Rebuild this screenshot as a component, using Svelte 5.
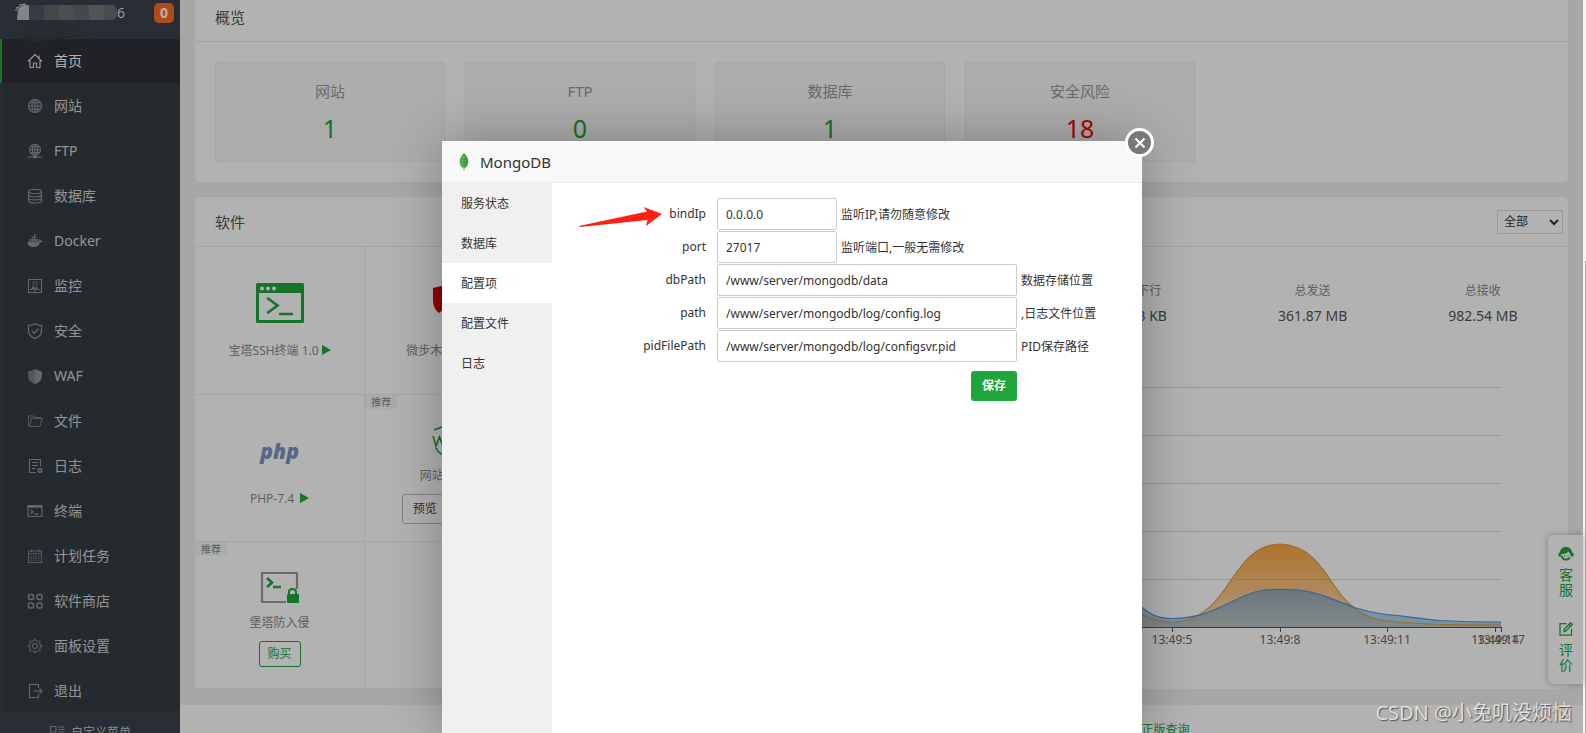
<script>
  const menu = [
    { name: '首页', icon: 'home', active: true },
    { name: '网站', icon: 'globe' },
    { name: 'FTP', icon: 'ftp' },
    { name: '数据库', icon: 'database' },
    { name: 'Docker', icon: 'docker' },
    { name: '监控', icon: 'monitor' },
    { name: '安全', icon: 'safe' },
    { name: 'WAF', icon: 'waf' },
    { name: '文件', icon: 'folder' },
    { name: '日志', icon: 'log' },
    { name: '终端', icon: 'terminal' },
    { name: '计划任务', icon: 'calendar' },
    { name: '软件商店', icon: 'store' },
    { name: '面板设置', icon: 'gear' },
    { name: '退出', icon: 'exit' }
  ];

  const overview = [
    { name: '网站', value: 1 },
    { name: 'FTP', value: 0 },
    { name: '数据库', value: 1 },
    { name: '安全风险', value: 18, risk: true }
  ];

  const traffic = [
    { name: '上行', value: '0.72 KB', dot: '#f7b851' },
    { name: '下行', value: '0.93 KB', dot: '#52a9ff' },
    { name: '总发送', value: '361.87 MB' },
    { name: '总接收', value: '982.54 MB' }
  ];

  const gridLines = [387, 435, 483, 531, 579];
  const ticks = [
    { x: 956, label: '13:48:59' },
    { x: 1064, label: '13:49:2' },
    { x: 1172, label: '13:49:5' },
    { x: 1280, label: '13:49:8' },
    { x: 1387, label: '13:49:11' },
    { x: 1495, label: '13:49:14' },
    { x: 1501, label: '13:49:17' }
  ];
  const downLine = 'M956 600C1000 590 1060 560 1100 575C1125 590 1135 604 1142 607.500C1152 616 1160 618.500 1172 618.500C1184 618.500 1190 617 1200 615C1222 609 1245 592 1264 590C1274 589.300 1290 589.300 1299 590C1318 592 1334 600 1354 607.500C1366 611 1377 613.500 1387 614.500C1404 616 1422 619 1440 620.500C1460 621.500 1480 622 1501 622';
  const upLine = 'M956 610C1000 600 1060 580 1100 590C1125 602 1135 610 1142 614C1152 620 1160 622 1172 622C1184 622 1190 620 1200 614C1232 596 1238 545 1280 544C1322 545 1330 592 1354 607.500C1364 617 1376 620 1387 621C1404 622.500 1422 624 1440 624.500L1501 625';

  const tabs = ['服务状态', '数据库', '配置项', '配置文件', '日志'];
  let activeTab = $state('配置项');

  let fields = $state([
    { key: 'bindIp', value: '0.0.0.0', hint: '监听IP,请勿随意修改', wide: false },
    { key: 'port', value: '27017', hint: '监听端口,一般无需修改', wide: false },
    { key: 'dbPath', value: '/www/server/mongodb/data', hint: '数据存储位置', wide: true },
    { key: 'path', value: '/www/server/mongodb/log/config.log', hint: ',日志文件位置', wide: true },
    { key: 'pidFilePath', value: '/www/server/mongodb/log/configsvr.pid', hint: 'PID保存路径', wide: true }
  ]);
</script>

{#snippet menuIcon(name)}
  <svg class="menu-icon" viewBox="0 0 16 16" fill="none" stroke="currentColor" stroke-width="1.100" aria-hidden="true">
    {#if name === 'home'}
      <path d="M1 8.500 8 1.500l7 7M3 7v7.500h3.500V10h3v4.500H13V7M12 5V2.500" />
    {:else if name === 'globe'}
      <circle cx="8" cy="8" r="6.500" /><ellipse cx="8" cy="8" rx="3" ry="6.500" />
      <path d="M8 1.500v13M1.500 8h13M2.700 4.700h10.600M2.700 11.300h10.600" />
    {:else if name === 'ftp'}
      <circle cx="8" cy="6.800" r="5.500" /><ellipse cx="8" cy="6.800" rx="2.600" ry="5.500" />
      <path d="M8 1.300v12M2.500 6.800h11M3.400 4h9.200M3.400 9.600h9.200M.500 14h15M6 14h4" />
      <path d="M6 14h4" stroke-width="2.500" />
    {:else if name === 'database'}
      <ellipse cx="8" cy="3.500" rx="6.500" ry="2.200" />
      <path d="M1.500 3.500v9.300c0 3 13 3 13 0V3.500M1.500 6.700c0 2.800 13 2.800 13 0M1.500 9.800c0 2.800 13 2.800 13 0" />
    {:else if name === 'docker'}
      <path fill="currentColor" stroke="none" d="M1 8.500h10.800c.600-1 .500-2 .1-3 1 .4 1.600 1.100 1.800 2 .8-.2 1.600 0 2.100.400-.500 1-1.500 1.500-2.700 1.500C12 12.500 9.600 14 6.500 14 3 14 .700 12.500.700 9.500zM2.500 6h1.800v1.900H2.500zM4.700 6h1.800v1.900H4.700zM6.900 6h1.800v1.900H6.900zM9.100 6h1.800v1.900H9.100zM4.700 3.800h1.800v1.800H4.700zM6.900 3.800h1.800v1.800H6.900zM6.900 1.600h1.800v1.800H6.900z" />
    {:else if name === 'monitor'}
      <path d="M1.500 1.500h13v13h-13zM3 11.500h2l1.200-3 1.600 4 1.500-3.500 1 2.500h2.500" />
      <path d="M5 4h6M5 6h6" stroke-width="1" opacity=".6" />
    {:else if name === 'safe'}
      <path d="M8 .8c2 1.300 4 1.700 6.500 1.700v5.200c0 3.800-2.500 6.300-6.500 7.700-4-1.400-6.500-3.900-6.500-7.700V2.500C4 2.500 6 2.100 8 .8zM4.700 7.800l2.600 2.500 4.200-4.500" stroke-width="1.300" />
    {:else if name === 'waf'}
      <path fill="currentColor" stroke="none" d="M8 .5 7 2 5.500 1.500 4.500 3 3 2.500 1 4v4c0 4 3 6.500 7 8z" opacity=".75" />
      <path fill="currentColor" stroke="none" d="m8 .5 1 1.500 1.500-.5 1 1.500 1.500-.5L15 4v4c0 4-3 6.500-7 8z" />
    {:else if name === 'folder'}
      <path d="M2.500 13.500h10.300l2.500-8H4.500zM1.500 12.500V3h5l1.500 1.500h5.500v1" opacity=".75" />
    {:else if name === 'log'}
      <path d="M13.500 8.500v-7h-11v13H9M5 4.500h6M5 7.500h6M5 10.500h4" />
      <circle cx="13" cy="12.500" r="1.800" stroke-width="1.500" />
    {:else if name === 'terminal'}
      <path d="M1 2.500h14v11H1z" /><path d="M1 3.500h14" stroke-width="2.500" />
      <path d="m3.500 6.800 2.500 2-2.500 2M7.500 11h3.500" stroke-width="1.300" />
    {:else if name === 'calendar'}
      <path d="M1.500 3h13v11.500h-13zM1.500 5.800h13M4.500 1v3M11.500 1v3" opacity=".8" />
      <path d="M3.500 8.200h9M3.500 10.200h9M3.500 12.200h9" stroke-dasharray="1.500 1" opacity=".8" />
    {:else if name === 'store'}
      <g stroke-width="1.500"><rect x="1.500" y="1.500" width="5" height="5" rx="1.500" /><rect x="10" y="1.500" width="5" height="5" rx="1.500" /><rect x="1.500" y="10" width="5" height="5" rx="1.500" /><rect x="10" y="10" width="5" height="5" rx="1.500" /></g>
    {:else if name === 'gear'}
      <path d="M8 1.200 9.600 3 12.800 3.200 13 6.400 14.800 8 13 9.600 12.800 12.800 9.600 13 8 14.800 6.400 13 3.200 12.800 3 9.600 1.200 8 3 6.400 3.200 3.200 6.400 3z" opacity=".85" />
      <circle cx="8" cy="8" r="2.500" opacity=".85" />
    {:else if name === 'exit'}
      <path d="M11.500 5V1.500h-9v13h9V11M7 8h8M12.500 5.500 15 8l-2.500 2.500" />
    {:else if name === 'custom'}
      <path d="M1.500 1.500h5.500v5.500H1.500zM9.500 2h6M9.500 4.500h6M9.500 7h6M1.500 10h5.500v5H1.500zM9.500 10.500h6M9.500 13.500h6" />
    {/if}
  </svg>
{/snippet}

<div class="screen">
  <div class="app">
    <aside class="sidebar">
      <header class="host">
        <svg class="mask" viewBox="0 0 104 42" aria-hidden="true">
          <path d="M2 20h40l44 15H30C12 38 4 32 2 20z" fill="#393f4a" />
          <path d="M6 33c10 5 30 3 82 2-32 2-58 6-72 7-5-2-8-5-10-9z" fill="#353a44" />
          <path d="M2 20C2 10 7 5 14 5v15z" fill="#bdbdbd" />
          <path d="M14 5h15v15H14z" fill="#4b5763" /><path d="M29 5h15v15H29z" fill="#626568" />
          <path d="M44 5h15v15H44z" fill="#706f71" /><path d="M59 5h15v15H59z" fill="#64686d" />
          <path d="M74 5h15v15H74z" fill="#7a7777" /><path d="M89 5h10l3 5v6l-3 4H89z" fill="#676d70" />
          <path d="M1 8l10-3M0 10l10-3M4 5l7-1M2 12l4-3" stroke="#d8d8d8" fill="none" />
        </svg>
        <span class="host-end">6</span>
        <span class="badge">0</span>
      </header>
      <nav>
        {#each menu as item}
          <a href="#{item.icon}" class:active={item.active}>
            {@render menuIcon(item.icon)}
            <span>{item.name}</span>
          </a>
        {/each}
      </nav>
      <button class="custom">{@render menuIcon('custom')}<span>自定义菜单</span></button>
    </aside>

    <main>
      <div class="content">
        <section class="panel overview">
          <h2>概览</h2>
          <ul>
            {#each overview as card}
              <li>
                <span>{card.name}</span>
                <a href="#{card.name}" class:risk={card.risk}>{card.value}</a>
              </li>
            {/each}
          </ul>
        </section>

        <div class="columns">
          <section class="panel software">
            <h2>软件</h2>
            <div class="cells">
              <div class="cell">
                <svg class="soft-icon" width="48" height="40" viewBox="0 0 48 40" aria-hidden="true">
                  <path d="M1.500 1.500h45v37h-45z" fill="none" stroke="#20a53a" stroke-width="3" stroke-linejoin="round" />
                  <path d="M1 1h46v9H1z" fill="#20a53a" />
                  <g fill="#fff"><circle cx="6" cy="5.500" r="2" /><circle cx="12" cy="5.500" r="2" /><circle cx="18" cy="5.500" r="2" /></g>
                  <path d="m12 15.500 9.500 7-9.500 7M24 31h12" fill="none" stroke="#20a53a" stroke-width="2.600" stroke-linecap="round" />
                </svg>
                <p>宝塔SSH终端 1.0<i class="play"></i></p>
              </div>
              <div class="cell">
                <svg class="soft-icon" width="34" height="40" viewBox="0 0 34 40" aria-hidden="true">
                  <path d="M0 5 17 1l17 4v13c0 5-2 9-5 12-3-1-4-3-5-5-1 6-4 11-7 14-3-3-6-8-7-14-1 2-2 4-4 5C2 27 0 22 0 17z" fill="#c00" />
                </svg>
                <p>微步木马检测 <i class="play"></i></p>
              </div>
              <div class="cell"></div><div class="cell"></div>

              <div class="cell">
                <span class="soft-icon php">php</span>
                <p>PHP-7.4 <i class="play"></i></p>
              </div>
              <div class="cell tight">
                <span class="tag">推荐</span>
                <svg class="soft-icon small" width="36" height="34" viewBox="0 0 36 34" fill="none" stroke="#20a53a" stroke-width="1.600" aria-hidden="true">
                  <path d="m2 6 16-6 16 6M4 24c2 5 8 8 14 10 6-2 12-5 14-10" /><path d="m1 12 3 10 3.500-9L11 22l3-10M18 22l4-10 4 10M29 22V12h6" />
                </svg>
                <p>网站防火墙</p>
                <div class="actions"><button class="plain">预览</button><button class="plain">购买</button></div>
              </div>
              <div class="cell"></div><div class="cell"></div>

              <div class="cell tight">
                <span class="tag">推荐</span>
                <svg class="soft-icon small" width="40" height="34" viewBox="0 0 40 34" fill="none" aria-hidden="true">
                  <path d="M37 18V2H2v29h24" stroke="#999" stroke-width="2.200" stroke-linejoin="round" />
                  <path d="m7 7 5 4.500L7 16M13 16h8" stroke="#20a53a" stroke-width="2.600" />
                  <path d="M29 24v-3c0-4 7-4 7 0v3" stroke="#20a53a" stroke-width="2" />
                  <rect x="27" y="23" width="12" height="9" rx="1" fill="#20a53a" />
                </svg>
                <p>堡塔防入侵</p>
                <div class="actions"><button class="buy">购买</button></div>
              </div>
              <div class="cell"></div><div class="cell"></div><div class="cell"></div>
            </div>
          </section>

          <section class="panel flow">
            <div class="flow-head">
              <h2>流量</h2>
              <select aria-label="网卡"><option>全部</option></select>
            </div>
            <div class="stats">
              {#each traffic as stat}
                <div>
                  <span>{#if stat.dot}<i class="dot" style="background: {stat.dot}"></i>{/if}{stat.name}</span>
                  <strong>{stat.value}</strong>
                </div>
              {/each}
            </div>
            <svg class="chart" viewBox="887 375 681 310" role="img" aria-label="流量">
              <defs>
                <linearGradient id="up" x1="0" y1="544" x2="0" y2="627" gradientUnits="userSpaceOnUse">
                  <stop offset="0" stop-color="#fca440" /><stop offset="1" stop-color="#f7dcbc" />
                </linearGradient>
                <linearGradient id="down" x1="0" y1="589" x2="0" y2="627" gradientUnits="userSpaceOnUse">
                  <stop offset="0" stop-color="#9aaab2" /><stop offset="1" stop-color="#b9c3c4" />
                </linearGradient>
                <clipPath id="under"><path d="{upLine}V627H956z" /></clipPath>
              </defs>
              {#each gridLines as y}
                <path d="M940 {y}.5H1501" stroke="#d6d6d6" />
              {/each}
              <path d="{upLine}V627H956z" fill="url(#up)" />
              <path d="M1235 579.500H1330" stroke="#a98458" opacity=".35" />
              <path d="{downLine}V627H956z" fill="#b3cee9" />
              <path d="{downLine}V627H956z" fill="url(#down)" clip-path="url(#under)" />
              <path d={upLine} fill="none" stroke="#d7a148" stroke-width="1.200" />
              <path d={downLine} fill="none" stroke="#4c93dc" stroke-width="1.200" />
              <path d="M940 627.500H1501" stroke="#555" />
              {#each ticks as tick}
                <path d="M{tick.x}.5 627v5" stroke="#555" />
                <text x={tick.x} y="644" text-anchor="middle">{tick.label}</text>
              {/each}
            </svg>
          </section>
        </div>
      </div>
      <footer>
        <span>宝塔Linux面板 ©2014-2023 广东堡塔安全技术有限公司 (bt.cn)</span>
        <a href="#bbs">论坛求助</a><a href="#docs">使用手册</a><a href="#wx">微信公众号</a><a href="#verify">正版查询</a>
      </footer>
    </main>

    <div class="service">
      <button>
        <svg width="16" height="14" viewBox="0 0 16 14" aria-hidden="true">
          <path d="M2 5.500C2.300 2 4.500 0 8 0s5.700 2 6 5.500l1.500.5v3.500H13C12.500 7 11.500 6 10.500 4.500 9 6.500 6 7 3.500 7L3 9.500H.5V6z" fill="#20a53a" />
          <path d="M3.500 9c1 4 6 5 8.500 1.500M7 12.500h3" fill="none" stroke="#20a53a" stroke-width="1.800" />
          <path d="M6 8.800h1M9.500 8.800h1" stroke="#20a53a" stroke-width="1.200" />
        </svg>
        <span>客服</span>
      </button>
      <button>
        <svg width="14" height="14" viewBox="0 0 14 14" fill="none" stroke="#20a53a" stroke-width="1.300" aria-hidden="true">
          <path d="M7.500 1.700H1v11.500h11.500V7M5 9.500l.5-2.500L11.500.8l1.800 1.700-6.300 6.500zM10 2.500l1.800 1.700" />
        </svg>
        <span>评价</span>
      </button>
    </div>

    <div class="overlay">
      <div class="modal" role="dialog" aria-label="MongoDB">
        <div class="modal-title">
          <svg width="10" height="18" viewBox="0 0 10 18" aria-hidden="true">
            <path d="M5 0C8.500 3.500 9.800 6.500 9.300 10 8.800 13 7 14.500 5 16z" fill="#459c42" />
            <path d="M5 0C1.500 3.500.2 6.500.7 10 1.200 13 3 14.500 5 16z" fill="#50ab4b" />
            <path d="M5 14v4" stroke="#b9bdb5" />
          </svg>
          <span>MongoDB</span>
        </div>
        <button class="close" aria-label="关闭">
          <svg width="12" height="12" viewBox="0 0 12 12" aria-hidden="true"><path d="m1.500 1.500 9 9M10.500 1.500l-9 9" stroke="#fff" stroke-width="2" /></svg>
        </button>
        <div class="modal-body">
          <div class="tabs">
            {#each tabs as tab}
              <button class:on={tab === activeTab} onclick={() => (activeTab = tab)}>{tab}</button>
            {/each}
          </div>
          <form onsubmit={(e) => e.preventDefault()}>
            {#each fields as field}
              <div class="row">
                <label for={field.key}>{field.key}</label>
                <input id={field.key} type="text" class:wide={field.wide} bind:value={field.value} />
                <span>{field.hint}</span>
              </div>
            {/each}
            <div class="submit"><button>保存</button></div>
            <svg class="pointer" width="84" height="20" viewBox="0 0 84 20" aria-hidden="true">
              <path d="M0 19 68 4.500 64.500 0 83 7 67 19l1.500-6L1 20z" fill="#ff2013" />
            </svg>
          </form>
        </div>
      </div>
    </div>
  </div>
  <div class="scrollbar"><i></i></div>
  <div class="watermark">CSDN @小兔叽没烦恼</div>
</div>

<style>
  :global(body) { margin: 0; }
  .screen, .screen * { box-sizing: border-box; }
  .screen {
    display: flex;
    height: 100vh;
    overflow: hidden;
    position: relative;
    font: 12px/20px "Noto Sans", "Noto Sans CJK SC", sans-serif;
    color: #333;
  }
  button, input, select { font: inherit; color: inherit; }
  button { padding: 0; border: 0; background: none; cursor: pointer; }
  a { color: inherit; text-decoration: none; }
  h2, p, ul { margin: 0; padding: 0; list-style: none; font-weight: 400; }
  i { display: inline-block; }
  .app { flex: 1; display: flex; min-width: 0; position: relative; background: #f0f0f0; }

  .sidebar { flex: none; width: 180px; background: #3c434e; overflow: hidden; }
  .host { display: flex; align-items: flex-start; height: 39px; padding: 0 6px 0 15px; color: #ddd; font-size: 14px; }
  .mask { width: 104px; height: 42px; flex: none; margin-right: -2px; }
  .host-end { line-height: 26px; }
  .badge { margin: 3px 0 0 auto; width: 20px; height: 20px; border-radius: 5px; background: #fc6d26; color: #fff; font-weight: 700; text-align: center; }
  nav { background: #363d42; border-left: 2px solid #3c4145; margin-bottom: 10px; }
  nav a { display: flex; align-items: center; gap: 11px; height: 45px; padding-left: 25px; color: #d4d4d4; font-size: 14px; }
  nav a.active { background: #2e3238; color: #fff; height: 44px; margin-left: -2px; border-left: 2px solid #20a53a; }
  .menu-icon { width: 16px; height: 16px; flex: none; color: #949494; }
  .active .menu-icon { color: #ddd; }
  .custom { display: flex; align-items: center; gap: 6px; margin-left: 49px; color: #c4c4c4; }

  main { flex: 1; min-width: 0; display: flex; flex-direction: column; }
  .content { padding: 0 15px 16px; }
  .panel { background: #fff; border-radius: 5px; overflow: hidden; }
  .panel h2 { font-size: 15px; color: #555; padding: 0 20px; line-height: 50px; }
  .overview { margin-bottom: 15px; border-radius: 0 0 5px 5px; }
  .panel.overview h2 { line-height: 34px; padding-bottom: 7px; border-bottom: 1px solid #e8e8e8; }
  .overview ul { display: flex; gap: 20px; padding: 20px; }
  .overview li { flex: 0 1 230px; height: 100px; padding-top: 13px; display: flex; flex-direction: column; align-items: center; background: #f8f8f8; border: 1px solid #ececec; border-radius: 2px; font-size: 15px; line-height: 30px; color: #999; }
  .overview li a { font-size: 25px; line-height: 44px; color: #20a53a; }
  .overview li a.risk { color: #f00; }

  .columns { display: grid; grid-template-columns: 1fr 1fr; gap: 11px; }
  .software h2, .flow-head { border-bottom: 1px solid #ececec; height: 50px; }
  .cells { display: grid; grid-template-columns: repeat(4, 1fr); grid-template-rows: 148px 147px 147px; }
  .cell { position: relative; display: flex; flex-direction: column; align-items: center; padding-top: 36px; color: #888; border-right: 1px solid #ededf6; border-bottom: 1px solid #ededf6; }
  .cell p { white-space: nowrap; }
  .soft-icon { flex: none; height: 40px; margin-bottom: 18px; }
  .cell.tight { padding-top: 29px; }
  .soft-icon.small { height: 34px; margin-bottom: 8px; }
  .php { font: italic 800 21px/40px "Open Sans", sans-serif; color: #7b93c4; }
  .play { border: 5px solid transparent; border-left: 9px solid #20a53a; border-right: 0; margin-left: 3px; }
  .tag { position: absolute; left: 0; top: 0; width: 32px; height: 14px; font-size: 10px; line-height: 14px; text-align: center; background: #f5f5f5; }
  .actions { display: flex; gap: 4px; margin-top: 8px; }
  .plain { width: 46px; height: 30px; border: 1px solid #bbb; border-radius: 3px; color: #444; }
  .buy { width: 42px; height: 26px; border: 1px solid #20a53a; border-radius: 3px; color: #20a53a; }

  .flow { display: flex; flex-direction: column; }
  .flow-head { display: flex; justify-content: space-between; align-items: center; padding-right: 5px; flex: none; }
  select { width: 66px; height: 24px; border: 1px solid #ddd; background: #fff; padding: 0 2px; }
  .stats { display: grid; grid-template-columns: repeat(4, 1fr); padding: 34px 0 0; text-align: center; }
  .stats span { display: block; color: #888; }
  .stats strong { display: block; font-weight: 400; font-size: 14px; line-height: 30px; color: #555; }
  .dot { width: 9px; height: 9px; border-radius: 50%; margin-right: 5px; }
  .chart { display: block; width: 100%; margin-top: 44px; }
  .chart text { font-size: 12px; fill: #666; }

  footer { flex: 1; background: #fff; display: flex; justify-content: center; gap: 19px; padding-top: 15px; color: #666; }
  footer a { color: #20a53a; }

  .service { position: absolute; right: 0; top: 535px; width: 35px; padding: 12px 5px 12px 6px; display: flex; flex-direction: column; gap: 25px; background: #fff; border-radius: 5px 0 0 5px; box-shadow: 0 0 6px rgba(0, 0, 0, 0.3); }
  .service button { display: flex; flex-direction: column; align-items: center; gap: 6px; color: #20a53a; font-size: 14px; line-height: 15px; }
  .service span { width: 14px; }

  .overlay { position: absolute; inset: 0; display: flex; justify-content: center; padding: 141px 0 0 1px; background: rgba(0, 0, 0, 0.3); }
  .modal { position: relative; width: 700px; display: flex; flex-direction: column; background: #fff; box-shadow: 1px 1px 50px rgba(0, 0, 0, 0.3); }
  .modal-title { display: flex; align-items: center; gap: 11px; height: 42px; flex: none; padding-left: 17px; background: #f8f8f8; border-bottom: 1px solid #eee; font-size: 15px; line-height: 40px; }
  .close { position: absolute; right: -12px; top: -13px; width: 29px; height: 29px; border: 3px solid #fff; border-radius: 50%; background: #787878; display: grid; place-items: center; }
  .modal-body { flex: 1; display: flex; }
  .tabs { width: 110px; background: #f0f0f0; }
  .tabs button { display: block; width: 100%; height: 40px; padding: 2px 0 0 19px; text-align: left; }
  .tabs .on { background: #fff; }
  form { position: relative; flex: 1; padding: 15px 20px 0 15px; }
  .row { display: flex; align-items: center; height: 32px; margin-bottom: 1px; }
  label { width: 139px; text-align: right; margin-right: 11px; }
  input { width: 120px; height: 32px; padding: 0 8px; border: 1px solid #ccc; border-radius: 2px; background: #fff; }
  input.wide { width: 300px; }
  .row span { margin-left: 4px; padding-top: 2px; }
  .submit { width: 450px; margin-top: 9px; display: flex; justify-content: flex-end; }
  .submit button { width: 46px; height: 30px; border-radius: 3px; background: #20a53a; color: #fff; font-weight: 700; }
  .pointer { position: absolute; left: 27px; top: 24px; }

  .scrollbar { flex: none; width: 3px; padding: 261px 0 0 2px; background: #f4f4f4; }
  .scrollbar i { display: block; height: 100%; background: #aaa; }
  .watermark { position: absolute; right: 14px; bottom: 5px; font-size: 20px; line-height: 30px; color: #dedede; text-shadow: 1px 1px 1px #555; white-space: nowrap; }
</style>
